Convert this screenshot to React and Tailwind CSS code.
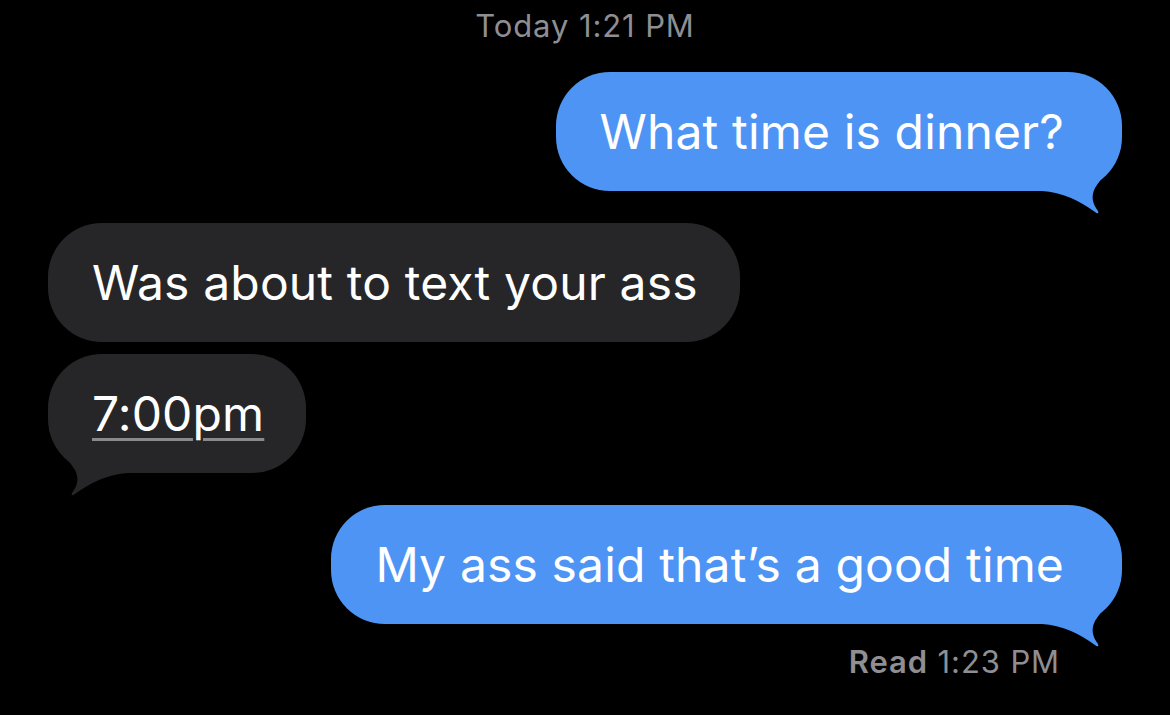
import React from "react";

function Tail({ color, side }) {
  // tail drawn at the bubble's bottom corner, mirrored for received messages
  const pos = side === "right" ? "right-0" : "left-0 -scale-x-100";
  return (
    <svg
      className={`absolute bottom-[-30px] ${pos}`}
      width="80"
      height="80"
      viewBox="0 0 80 80"
    >
      <path
        d="M0 50 C20 51 38 60 53 71 C55.5 73 57 72.5 56 70 C50 62 49 55 53 47 C60 36 72 24 79 6 L79 0 L0 0 Z"
        fill={color}
      />
    </svg>
  );
}

function Bubble({ text, sent, tail, children }) {
  const color = sent ? "#4e94f4" : "#262628";
  return (
    <div className={`flex ${sent ? "justify-end" : "justify-start"}`}>
      <div
        className={`relative flex h-[119px] items-center rounded-[54px] pl-[44px] text-[48px] leading-none text-white ${
          sent ? "bg-[#4e94f4] pr-[58px]" : "bg-[#262628] pr-[42px]"
        }`}
      >
        {tail && <Tail color={color} side={sent ? "right" : "left"} />}
        <span className="relative tracking-[0.15px]">{children || text}</span>
      </div>
    </div>
  );
}

export default function App() {
  return (
    <div className="h-[715px] w-full overflow-hidden bg-black px-[48px] pt-[8px] font-['Inter',sans-serif]">
      <p className="text-center text-[31px] leading-[36px] tracking-[0.9px] text-[#8e8e93]">
        Today 1:21 PM
      </p>

      <div className="mt-[28px]">
        <Bubble sent tail text="What time is dinner?" />
      </div>

      <div className="mt-[32px]">
        <Bubble text="Was about to text your ass" />
      </div>

      <div className="mt-[12px]">
        <Bubble tail>
          <span className="underline decoration-[#8a8a8e] decoration-[3px] underline-offset-[7px]">
            7:00pm
          </span>
        </Bubble>
      </div>

      <div className="mt-[32px]">
        <Bubble sent tail text="My ass said that’s a good time" />
      </div>

      <p className="mr-[62px] mt-[20px] text-right text-[31px] leading-[36px] tracking-[0.9px] text-[#8e8e93]">
        <span className="font-semibold">Read</span> 1:23 PM
      </p>
    </div>
  );
}
